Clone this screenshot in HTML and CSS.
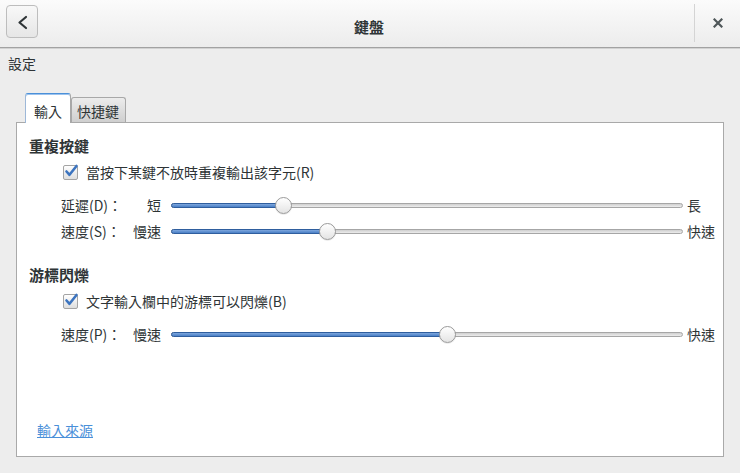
FILE: index.html
```html
<!DOCTYPE html>
<html lang="zh-Hant">
<head>
<meta charset="utf-8">
<title>鍵盤</title>
<link rel="stylesheet" href="styles.css">
</head>
<body>
<header class="titlebar">
  <div class="tb-left">
    <button class="back-btn" aria-label="返回">
      <svg width="32" height="33" viewBox="0 0 32 33"><path d="M20 12 L13.5 17.5 L20 23" fill="none" stroke="#2e3436" stroke-width="2.2" stroke-linecap="round" stroke-linejoin="round"/></svg>
    </button>
  </div>
  <div class="tb-title">鍵盤</div>
  <div class="tb-right">
    <svg width="10" height="10" viewBox="0 0 10 10"><path d="M1.5 1.5 L8.5 8.5 M8.5 1.5 L1.5 8.5" stroke="#4f5759" stroke-width="2.2" stroke-linecap="square"/></svg>
  </div>
</header>

<div class="page-label">設定</div>

<div class="notebook">
  <div class="tabs">
    <div class="tab active">輸入</div>
    <div class="tab">快捷鍵</div>
  </div>
  <div class="panel">
    <div class="section-title">重複按鍵</div>
    <div class="check-row">
      <span class="checkbox"><svg width="17" height="15" viewBox="0 0 17 15"><path d="M3.5 7.5 L6.5 10.8 L13.5 2" fill="none" stroke="#3c74bf" stroke-width="2.6" stroke-linecap="round" stroke-linejoin="round"/></svg></span>
      <span>當按下某鍵不放時重複輸出該字元(R)</span>
    </div>
    <div class="slider-row first">
      <span class="slabel">延遲(D)：</span>
      <span class="smin">短</span>
      <div class="track"><div class="fill" style="width:112px"></div><div class="knob" style="left:112px"></div></div>
      <span class="smax">長</span>
    </div>
    <div class="slider-row">
      <span class="slabel">速度(S)：</span>
      <span class="smin">慢速</span>
      <div class="track"><div class="fill" style="width:156px"></div><div class="knob" style="left:156px"></div></div>
      <span class="smax">快速</span>
    </div>

    <div class="section-title second">游標閃爍</div>
    <div class="check-row">
      <span class="checkbox"><svg width="17" height="15" viewBox="0 0 17 15"><path d="M3.5 7.5 L6.5 10.8 L13.5 2" fill="none" stroke="#3c74bf" stroke-width="2.6" stroke-linecap="round" stroke-linejoin="round"/></svg></span>
      <span>文字輸入欄中的游標可以閃爍(B)</span>
    </div>
    <div class="slider-row first">
      <span class="slabel">速度(P)：</span>
      <span class="smin">慢速</span>
      <div class="track"><div class="fill" style="width:276px"></div><div class="knob" style="left:276px"></div></div>
      <span class="smax">快速</span>
    </div>

    <a class="link" href="#">輸入來源</a>
  </div>
</div>
</body>
</html>
```

FILE: styles.css
```css
* { box-sizing: border-box; }
html, body { margin: 0; padding: 0; }
body {
  width: 740px;
  height: 473px;
  overflow: hidden;
  background: #ededed;
  color: #2e3436;
  font-family: "Noto Sans CJK TC", "Noto Sans", sans-serif;
  font-size: 14px;
  line-height: 16px;
}

.titlebar {
  height: 48px;
  display: grid;
  grid-template-columns: 46px 1fr 46px;
  background: linear-gradient(#fbfbfb, #ececec);
  border-bottom: 1px solid #a2a2a2;
  box-shadow: 0 1px 0 #d2d2d2;
}
.tb-left { padding: 5px 0 0 6px; }
.back-btn {
  width: 32px;
  height: 33px;
  padding: 0;
  margin: 0;
  display: block;
  border: 1px solid #bdbdbd;
  border-radius: 4px;
  background: linear-gradient(#f8f8f8, #e6e6e6);
}
.back-btn svg { display: block; margin: -1px; }
.tb-title {
  display: flex;
  align-items: center;
  justify-content: center;
  font-weight: bold;
  font-size: 15px;
  padding-top: 6px;
  padding-right: 2px;
}
.tb-right {
  margin: 4px 0 5px;
  border-left: 1px solid #d4d4d4;
  display: flex;
  align-items: center;
  justify-content: center;
  padding-left: 1px;
}

.page-label {
  padding: 7px 0 0 8px;
  height: 23px;
}

.notebook {
  margin: 22px 16px 0;
}
.tabs {
  display: flex;
  align-items: flex-end;
  height: 29px;
  padding-left: 9px;
  line-height: 18px;
}
.tab {
  height: 25px;
  padding: 4px 6px 0 5px;
  border: 1px solid #a8a8a8;
  border-bottom: none;
  border-radius: 3px 3px 0 0;
  background: linear-gradient(#ececec, #cfcfcf);
  white-space: nowrap;
}
.tab.active {
  position: relative;
  z-index: 1;
  height: 30px;
  margin-bottom: -1px;
  padding: 8px 8px 0;
  background: #ffffff;
  border-top: 1px solid #4a90d9;
  border-left-color: #9db8d8;
  border-right-color: #a8a8a8;
  box-shadow: inset 0 1px 0 #9cc3ee;
}

.panel {
  height: 335px;
  background: #ffffff;
  border: 1px solid #a9a9a9;
  padding: 13px 12px 16px;
  display: flex;
  flex-direction: column;
}

.section-title {
  font-weight: bold;
  font-size: 15px;
  line-height: 20px;
  height: 20px;
}
.section-title.second { margin-top: 21px; }

.check-row {
  display: flex;
  align-items: center;
  height: 20px;
  margin-top: 6px;
  margin-left: 34px;
  white-space: nowrap;
}
.checkbox {
  width: 15px;
  height: 15px;
  margin-right: 8px;
  border: 1px solid #a4a4a4;
  border-radius: 2px;
  background: linear-gradient(#ffffff, #dedede);
  position: relative;
  flex: none;
}
.checkbox svg { position: absolute; left: -1px; top: -2px; }

.slider-row {
  display: flex;
  align-items: center;
  height: 26px;
  margin-left: 32px;
  white-space: nowrap;
}
.slider-row > * { flex: none; }
.slider-row.first { margin-top: 10px; }
.slabel { width: 72px; }
.smin { width: 28px; text-align: right; margin-right: 10px; }
.smax { margin-left: 4px; }
.track {
  position: relative;
  width: 512px;
  height: 5px;
  border: 1px solid #a6a6a6;
  border-radius: 3px;
  background: linear-gradient(#cfcfcf, #ececec);
}
.fill {
  position: absolute;
  left: -1px;
  top: -1px;
  height: 5px;
  border: 1px solid #2f5e9e;
  border-radius: 3px 0 0 3px;
  background: linear-gradient(#7ea7dd, #4a7fc6);
}
.knob {
  position: absolute;
  top: -7px;
  width: 17px;
  height: 17px;
  margin-left: -9px;
  border: 1px solid #9a9a9a;
  border-radius: 50%;
  background: linear-gradient(#ffffff, #e4e4e4);
  box-shadow: 0 1px 0 rgba(0,0,0,0.08);
}

.link {
  margin-top: auto;
  margin-left: 8px;
  line-height: 20px;
  color: #4a90d9;
  text-decoration: underline;
  align-self: flex-start;
}
```
